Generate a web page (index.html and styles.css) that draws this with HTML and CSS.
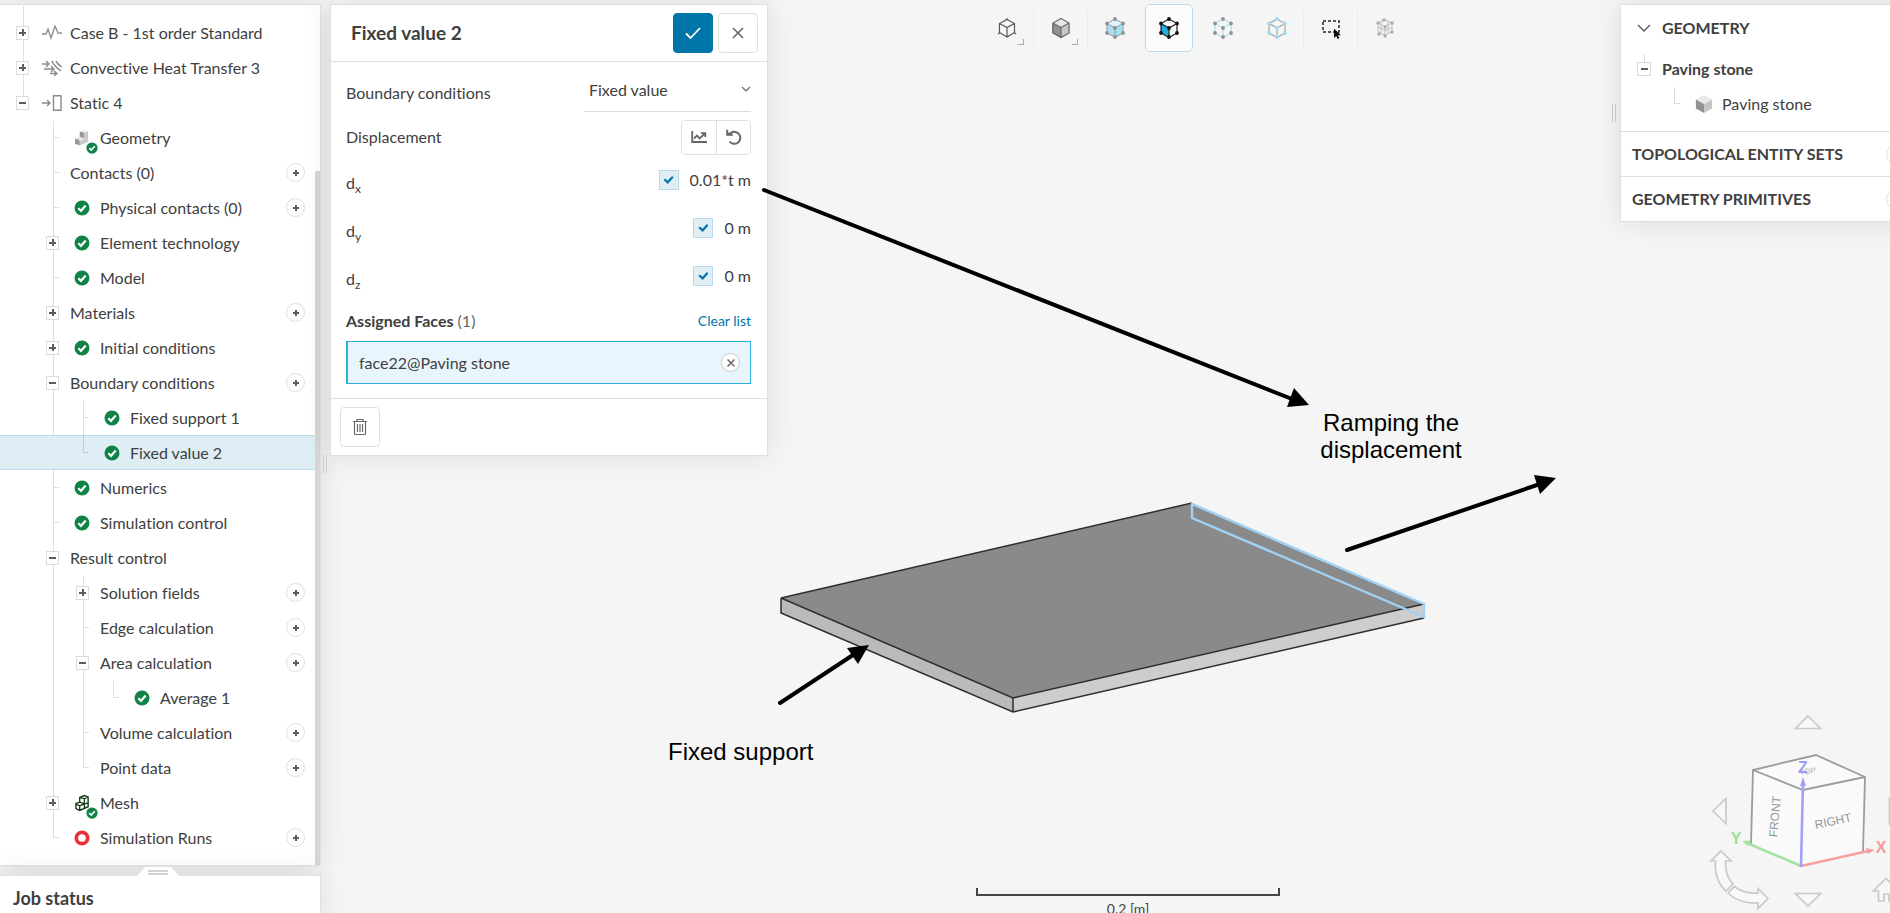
FILE: index.html
```
<!DOCTYPE html>
<html lang="en">
<head>
<meta charset="utf-8">
<title>Simulation workbench</title>
<link rel="stylesheet" href="styles.css">
</head>
<body>
<svg class="defs" aria-hidden="true">
  <symbol id="ok" viewBox="0 0 16 16"><circle cx="8" cy="8" r="7.5" fill="#0f8345"/><path d="M4.3 8.2l2.7 2.6 4.7-5.2" fill="none" stroke="#fff" stroke-width="2.2"/></symbol>
  <symbol id="cube" viewBox="0 0 20 22"><path d="M10 1l9 5-9 5-9-5z" fill="#e9e9e9"/><path d="M1 6l9 5v10l-9-5z" fill="#929292"/><path d="M19 6l-9 5v10l9-5z" fill="#c6c6c8"/></symbol>
</svg>
<div class="app">
  <svg class="scene" viewBox="0 0 1890 913" role="img" aria-label="Paving stone model">
    <path d="M781 598L781 613 1013 712 1013 698z" fill="#bababa"/>
    <path d="M1013 698V712L1424 618V604z" fill="#cdcdcd"/>
    <path d="M781 598L1192 503 1424 604 1013 698z" fill="#8a8a8a"/>
    <path d="M781 598L1192 503M781 598V613L1013 712 1424 618M781 598L1013 698 1424 604M1013 698V712" fill="none" stroke="#2e2e2e" stroke-width="1.5"/>
    <path d="M1192 504L1424 604V617L1192 518z" fill="none" stroke="#9fd2f6" stroke-width="2.4"/>
    <path d="M977 888V895H1279V888" fill="none" stroke="#444" stroke-width="2"/>
    <text x="1128" y="914" class="scale-label" text-anchor="middle">0.2 [m]</text>
  </svg>

  <aside class="sidebar">
    <nav class="panel tree-panel" aria-label="Simulation tree">
      <ul class="tree l0">
        <li><div class="row d0"><button class="tog" aria-label="Expand"></button><svg class="ico wide" viewBox="0 0 20 16"><path d="M0 9H4L6 4 9 13 13 1 16 8H20" fill="none" stroke="#8f8f8f" stroke-width="1.4"/></svg><span>Case B - 1st order Standard</span></div></li>
        <li><div class="row d0"><button class="tog" aria-label="Expand"></button><svg class="ico wide" viewBox="0 0 20 16"><g fill="none" stroke="#8a8a8a" stroke-width="1.4"><path d="M0 4H6M4 1l3 3-3 3M2 9H11M9 6l3 3-3 3M8 13.500H14M12 11l3 2.500-3 2.500M10 1q1 4 9 10M14 1q1 3 6 6"/></g></svg><span>Convective Heat Transfer 3</span></div></li>
        <li><div class="row d0"><button class="tog" aria-label="Collapse"></button><svg class="ico wide" viewBox="0 0 20 16"><path d="M0 8H8M5 5l3 3-3 3M11.500.8H19V15.200H11.500z" fill="none" stroke="#8a8a8a" stroke-width="1.4"/></svg><span>Static 4</span></div>
        <ul class="l1">
          <li><div class="row d1"><i class="tick"></i><span class="badged"><svg class="geo" viewBox="0 0 16 18"><path d="M5 2l5-2 4 1.500-4 2z" fill="#eee"/><path d="M5 2l5 1.500V10L5 8z" fill="#969696"/><path d="M10 3.500l4-2V13l-9 4V12l5-2z" fill="#cacaca"/><path d="M0 9.500l5-2 5 2-5 2z" fill="#e3e3e3"/><path d="M0 9.500l5 2V17l-5-2z" fill="#989898"/></svg><svg class="badge"><use href="#ok"/></svg></span><span>Geometry</span></div></li>
          <li><div class="row d1"><i class="tick"></i><span>Contacts (0)</span><button class="add" aria-label="Add contact"></button></div></li>
          <li><div class="row d1"><i class="tick"></i><svg class="ico"><use href="#ok"/></svg><span>Physical contacts (0)</span><button class="add" aria-label="Add physical contact"></button></div></li>
          <li><div class="row d1"><button class="tog" aria-label="Expand"></button><svg class="ico"><use href="#ok"/></svg><span>Element technology</span></div></li>
          <li><div class="row d1"><i class="tick"></i><svg class="ico"><use href="#ok"/></svg><span>Model</span></div></li>
          <li><div class="row d1"><button class="tog" aria-label="Expand"></button><span>Materials</span><button class="add" aria-label="Add material"></button></div></li>
          <li><div class="row d1"><button class="tog" aria-label="Expand"></button><svg class="ico"><use href="#ok"/></svg><span>Initial conditions</span></div></li>
          <li><div class="row d1"><button class="tog" aria-label="Collapse"></button><span>Boundary conditions</span><button class="add" aria-label="Add boundary condition"></button></div>
            <ul class="l2">
              <li><div class="row d2"><i class="tick"></i><svg class="ico"><use href="#ok"/></svg><span>Fixed support 1</span></div></li>
              <li><div class="row d2 selected"><i class="tick"></i><svg class="ico"><use href="#ok"/></svg><span>Fixed value 2</span></div></li>
            </ul></li>
          <li><div class="row d1"><i class="tick"></i><svg class="ico"><use href="#ok"/></svg><span>Numerics</span></div></li>
          <li><div class="row d1"><i class="tick"></i><svg class="ico"><use href="#ok"/></svg><span>Simulation control</span></div></li>
          <li><div class="row d1"><button class="tog" aria-label="Collapse"></button><span>Result control</span></div>
            <ul class="l2">
              <li><div class="row d2"><button class="tog" aria-label="Expand"></button><span>Solution fields</span><button class="add" aria-label="Add solution field"></button></div></li>
              <li><div class="row d2"><i class="tick"></i><span>Edge calculation</span><button class="add" aria-label="Add edge calculation"></button></div></li>
              <li><div class="row d2"><button class="tog" aria-label="Collapse"></button><span>Area calculation</span><button class="add" aria-label="Add area calculation"></button></div>
                <ul class="l3">
                  <li><div class="row d3"><i class="tick"></i><svg class="ico"><use href="#ok"/></svg><span>Average 1</span></div></li>
                </ul></li>
              <li><div class="row d2"><i class="tick"></i><span>Volume calculation</span><button class="add" aria-label="Add volume calculation"></button></div></li>
              <li><div class="row d2"><i class="tick"></i><span>Point data</span><button class="add" aria-label="Add point data"></button></div></li>
            </ul></li>
          <li><div class="row d1"><button class="tog" aria-label="Expand"></button><span class="badged"><svg class="geo" viewBox="0 0 16 18"><path d="M5 3l5-2 4 1.500V13l-9 4-4-2V9.500L5 8zM5 3l5 1.500 4-2M10 4.500V10M5 8l5 2-5 2-4-2M5 12v5M10 10v5M10 10l4-1" fill="none" stroke="#173d1a" stroke-width="1.5"/></svg><svg class="badge"><use href="#ok"/></svg></span><span>Mesh</span></div></li>
          <li><div class="row d1"><i class="tick"></i><svg class="ico" viewBox="0 0 16 16"><circle cx="8" cy="8" r="5.700" fill="#fff" stroke="#e9303b" stroke-width="3.700"/></svg><span>Simulation Runs</span><button class="add" aria-label="Add simulation run"></button></div></li>
        </ul></li>
      </ul>
      <div class="scrollbar"></div>
    </nav>
    <div class="resize"><svg viewBox="0 0 42 10"><path d="M0 10L8 1H34L42 10z" fill="#fff"/><path d="M11 5H31M11 8H31" stroke="#c4c4c4" stroke-width="1.500"/></svg></div>
    <section class="panel jobs"><h2>Job status</h2></section>
  </aside>
  <div class="grip grip-left"></div>

  <form class="panel settings">
    <header><h1>Fixed value 2</h1>
      <button type="button" class="btn primary" aria-label="Apply"><svg viewBox="0 0 16 14"><path d="M1 7.500l4.500 4.500L15 2" fill="none" stroke="#fff" stroke-width="1.800"/></svg></button>
      <button type="button" class="btn" aria-label="Close"><svg viewBox="0 0 16 14"><path d="M3 2l10 10M13 2L3 12" fill="none" stroke="#666" stroke-width="1.600"/></svg></button>
    </header>
    <div class="fields">
      <div class="field kind"><label for="kind">Boundary conditions</label>
        <span class="select"><select id="kind"><option>Fixed value</option></select><svg viewBox="0 0 10 6"><path d="M1 1l4 4 4-4" fill="none" stroke="#666" stroke-width="1.200"/></svg></span></div>
      <div class="field disp"><span>Displacement</span>
        <span class="group"><button type="button" aria-label="Plot"><svg viewBox="0 0 16 14"><path d="M1.200 1V12H16M3 8.500L6 5.500l2.500 3L13.500 4M10 3.200h4.300V7" fill="none" stroke="#666" stroke-width="1.800"/></svg></button><button type="button" aria-label="Reset"><svg viewBox="0 0 16 16"><path d="M1 5.500L5 3.800A6 6 0 1 1 3.500 12.500M1.200.8V5.800H6.800" fill="none" stroke="#666" stroke-width="2"/></svg></button></span></div>
      <div class="field comp"><label for="dx">d<sub>x</sub></label><span class="val"><input type="checkbox" id="dx" checked>0.01*t m</span></div>
      <div class="field comp"><label for="dy">d<sub>y</sub></label><span class="val"><input type="checkbox" id="dy" checked>0 m</span></div>
      <div class="field comp"><label for="dz">d<sub>z</sub></label><span class="val"><input type="checkbox" id="dz" checked>0 m</span></div>
      <div class="field faces"><span><b>Assigned Faces</b> <span class="count">(1)</span></span><a href="#clear">Clear list</a></div>
      <div class="face"><span>face22@Paving stone</span><button type="button" class="remove" aria-label="Remove face"><svg viewBox="0 0 10 10"><path d="M1.500 1.500l7 7M8.500 1.500l-7 7" stroke="#666" stroke-width="1.500"/></svg></button></div>
    </div>
    <footer><button type="button" class="btn" aria-label="Delete"><svg class="trash" viewBox="0 0 14 18"><path d="M0 3.500H14M4 3V1.500H10V3M1.500 4V15.500Q1.500 16.500 2.500 16.500H11.500Q12.500 16.500 12.500 15.500V4M4.500 6v8M7 6v8M9.500 6v8" fill="none" stroke="#6a6a6a" stroke-width="1.200"/></svg></button></footer>
  </form>

  <div class="toolbar" role="toolbar" aria-label="Viewer">
    <button class="menu" aria-label="View"><svg viewBox="0 0 20 22"><path d="M10 2.500l7.500 4V15.500L10 20 2.500 15.500V6.500zM2.500 6.500l7.500 4 7.500-4M10 10.500V20M10 1v2M1 17l2-1.500M19 17l-2-1.500" fill="#fafafa" stroke="#555" stroke-width="1.200"/></svg></button>
    <button class="menu sep" aria-label="Render mode"><svg viewBox="0 0 20 22"><use href="#cube"/><path d="M10 1.500l8 4.500V16L10 20.500 2 16V6zM2 6l8 4.500L18 6M10 10.500V20" fill="none" stroke="#666" stroke-width="1.100"/></svg></button>
    <button class="sep" aria-label="Select volumes"><svg viewBox="0 0 20 22"><path d="M10 2l8 4.500V16L10 20.500 2 16V6.500z" fill="#a8e0f3"/><path d="M10 2l8 4.500-8 4.500-8-4.500z" fill="#dff2f9"/><path d="M10 2l8 4.500V16L10 20.500 2 16V6.500zM2 6.500l8 4.500 8-4.500M10 11V20" fill="none" stroke="#8f9da3"/><path d="M10 2h0M18 6.500h0M18 16h0M10 20h0M2 16h0M2 6.500h0M10 11h0" stroke="#919191" stroke-width="3.800" stroke-linecap="round"/></svg></button>
    <button class="active" aria-label="Select faces"><svg viewBox="0 0 20 22"><path d="M2 6.500l8 4.500V20L2 16z" fill="#22aee3"/><path d="M10 2l8 4.500V16L10 20.500 2 16V6.500zM2 6.500l8 4.500 8-4.500M10 11V20" fill="none" stroke="#222" stroke-width="1.200"/><path d="M10 2h0M18 6.500h0M18 16h0M10 20h0M2 16h0M2 6.500h0M10 11h0" stroke="#111" stroke-width="3.800" stroke-linecap="round"/></svg></button>
    <button aria-label="Select edges"><svg viewBox="0 0 20 22"><path d="M10 2l8 4.500V16L10 20.500 2 16V6.500zM2 6.500l8 4.500 8-4.500M10 11V20" fill="none" stroke="#b8e3f2" stroke-width="1.400"/><path d="M10 2h0M18 6.500h0M18 16h0M10 20h0M2 16h0M2 6.500h0M10 11h0" stroke="#919191" stroke-width="3.800" stroke-linecap="round"/></svg></button>
    <button aria-label="Select vertices"><svg viewBox="0 0 20 22"><path d="M10 2l8 4.500V16L10 20.500 2 16V6.500zM2 6.500l8 4.500 8-4.500M10 11V20" fill="none" stroke="#a5a5a5" stroke-width="1.200"/><path d="M10 2h0M18 6.500h0M18 16h0M10 20h0M2 16h0M2 6.500h0M10 11h0" stroke="#a0def3" stroke-width="3.800" stroke-linecap="round"/></svg></button>
    <button class="sep" aria-label="Box select"><svg viewBox="0 0 20 22"><path d="M2 4H18V15H2z" fill="none" stroke="#222" stroke-width="1.500" stroke-dasharray="3 2"/><path d="M13 11.500V21l2.200-2 1.500 3 1.700-1-1.500-2.700H20z" fill="#111"/></svg></button>
    <button class="sep" aria-label="Select mesh"><svg viewBox="0 0 20 22"><path d="M9 2.500l8 3.500V14.500L10 18.500 3 14.500V6zM3 6l7 3.500L17 6M10 9.500v9M3 10l7 3.500 7-3.500M6 4v12M13 4v12" fill="none" stroke="#bdbdbd"/><path d="M9 3h0M17 6h0M17 15h0M10 19h0M4 17h0M3 6h0M10 10h0" stroke="#acacac" stroke-width="3.400" stroke-linecap="round"/></svg></button>
  </div>
  <div class="grip grip-right"></div>

  <aside class="panel geometry">
    <section class="bodies">
      <h3><svg viewBox="0 0 14 8"><path d="M1 1l6 6 6-6" fill="none" stroke="#555" stroke-width="1.300"/></svg>GEOMETRY</h3>
      <div class="part"><button class="tog" aria-label="Collapse"></button><b>Paving stone</b></div>
      <div class="part body"><i></i><svg><use href="#cube"/></svg><span>Paving stone</span></div>
    </section>
    <section class="sets"><h3>TOPOLOGICAL ENTITY SETS</h3><button class="add" aria-label="Add entity set"></button></section>
    <section class="sets"><h3>GEOMETRY PRIMITIVES</h3><button class="add" aria-label="Add primitive"></button></section>
  </aside>

  <svg class="navcube" viewBox="0 0 200 213" role="img" aria-label="View cube">
    <path d="M63 70L126 55 175 77V152L111 166 61 144z" fill="#fafafa"/>
    <g fill="none" stroke="#9c9c9c" stroke-width="1.800"><path d="M61 144L63 70 126 55 175 77 173 152M63 70L113 90 175 77"/></g>
    <g fill="#f8f8f8" stroke="#c9c9c9" stroke-width="1.700"><path d="M118 16l12.500 12.500H105.500zM118 206l12.500-12.500H105.500zM23 111L36 98.500V123.500zM212 111L199.500 98.500V123.500z"/>
      <path d="M31 151L41 161H35.500Q35 176 43 184L36 191Q24 180 25.500 161H21z"/><path d="M38 193L44.500 186.500Q54 194 68 193V188.500L78 198.500 68 208.500V203Q49 204 38 193z"/>
      <path d="M196 178.500L209 191H204V201H199V194H194V201H188.500V191H183.500z"/></g>
    <text x="118" y="74" class="face-label top" transform="rotate(-8 118 74)" text-anchor="middle">TOP</text>
    <text x="89" y="117" class="face-label" transform="rotate(-85 89 117)" text-anchor="middle">FRONT</text>
    <text x="144" y="125" class="face-label" transform="rotate(-12 144 125)" text-anchor="middle">RIGHT</text>
    <g stroke-width="2.600"><path d="M111 166L57 143" stroke="#a2e3a2"/><path d="M111 166L178 151" stroke="#f7a0a0"/><path d="M111 167L113 82" stroke="#a0a0f8"/></g>
    <path d="M52 141l9-.5-3 5.500z" fill="#a2e3a2"/><path d="M185 150l-9-2 1.500 6z" fill="#f7a0a0"/><path d="M113 77l-3 9h6z" fill="#a0a0f8"/>
    <text x="46" y="144" class="axis y" text-anchor="middle">Y</text><text x="191" y="153" class="axis x" text-anchor="middle">X</text><text x="113" y="73" class="axis z" text-anchor="middle">Z</text>
  </svg>

  <svg class="notes" viewBox="0 0 1890 913" role="img" aria-label="Annotations">
    <g stroke="#000" stroke-width="4" stroke-linecap="round"><path d="M764 190L1292 399M780 703L856 653M1347 550L1540 484"/></g>
    <path d="M1309 405L1294 388 1287 407zM869 645L847 648 858 664zM1556 478L1534 475 1540 494z"/>
    <text x="1391" y="431" text-anchor="middle">Ramping the</text><text x="1391" y="458" text-anchor="middle">displacement</text>
    <text x="668" y="760">Fixed support</text>
  </svg>
</div>
</body>
</html>
```
FILE: styles.css
```
* { box-sizing: border-box; }
body { margin: 0; background: #f5f5f5; color: #404040; font: 16px/20px Lato, "Open Sans", sans-serif; font-variant-ligatures: none; overflow: hidden; }
button { font: inherit; padding: 0; background: #fff; border: 1px solid #e0e0e0; display: grid; place-items: center; place-content: center; }
h1, h2, h3, ul { margin: 0; padding: 0; }
ul { list-style: none; position: relative; }
.defs { position: absolute; width: 0; height: 0; }
.app { position: relative; display: flex; align-items: flex-start; height: 100vh; overflow: hidden; padding-top: 4px; }
.scene, .notes { position: absolute; top: 0; left: 0; width: 100%; height: 100%; pointer-events: none; }
.scale-label { font-size: 14px; fill: #444; }
.notes text { font: 24px "Liberation Sans", Arial, sans-serif; fill: #000; }
.panel { position: relative; background: #fff; border: 1px solid #e0e0e0; box-shadow: 0 0 28px rgba(0, 0, 0, .1); }

.sidebar { position: relative; flex: 0 0 321px; display: flex; flex-direction: column; height: 100%; }
.tree-panel { border-left: 0; padding: 10px 0; }
.row { display: flex; align-items: center; height: 35px; margin-right: 5px; padding-right: 10px; border: solid transparent; border-width: 1px 0; }
.row.d0 { padding-left: 16px; }
.row.d1 { padding-left: 46px; }
.row.d2 { padding-left: 76px; }
.row.d3 { padding-left: 106px; }
.row.selected { background: #dfedf5; border-color: #b9dcea; }
.tree ul::before, .l0::before { content: ""; position: absolute; top: 1px; bottom: 17px; width: 1px; background: rgba(0, 0, 0, .13); }
.tree.l0::before { left: 23px; top: -9px; height: 97px; bottom: auto; }
.tree .l1::before { left: 53px; }
.tree .l2::before { left: 83px; }
.tree .l3::before { left: 113px; }
.tog { position: relative; width: 13px; height: 14px; flex: none; margin-right: 11px; border-color: #dcdcdc; }
.tog::before, .add::before, .add::after { content: ""; grid-area: 1 / 1; width: 7px; height: 2px; background: #5d5d5d; }
.tog[aria-label="Expand"]::after { content: ""; grid-area: 1 / 1; width: 2px; height: 7px; background: #5d5d5d; }
.tick { width: 5px; height: 1px; margin: 0 11px 0 8px; background: rgba(0, 0, 0, .13); }
.ico { width: 16px; height: 16px; margin: 0 10px 0 4px; }
.ico.wide { width: 20px; margin: 0 8px 0 2px; }
.badged { position: relative; width: 30px; height: 18px; padding-left: 5px; }
.geo { display: block; width: 15px; height: 18px; }
.badge { position: absolute; left: 16px; top: 13px; width: 12px; height: 12px; }
.add { width: 19px; height: 19px; border-radius: 50%; margin-left: auto; border-color: #dcdfe4; }
.add::before { width: 6px; }
.add::after { width: 2px; height: 6px; }
.scrollbar { position: absolute; right: 0; top: 166px; bottom: 0; width: 5px; background: #d6d6d6; }
.resize { position: relative; z-index: 1; height: 9px; display: flex; justify-content: center; margin: 0 6px 0 0; }
.resize svg { width: 42px; height: 10px; }
.jobs { flex: 1; border-left: 0; padding: 11px 13px; }
.jobs h2 { font-size: 18px; line-height: 22px; }
.grip { position: relative; flex: none; width: 4px; height: 18px; border: solid #ccd2d6; border-width: 0 1px; }
.grip-left { margin: 451px 3px 0 2px; }

.settings { flex: 0 0 438px; }
.settings header { display: flex; align-items: center; gap: 5px; height: 57px; padding: 0 9px 0 20px; border-bottom: 1px solid #e0e0e0; }
.settings h1 { flex: 1; font-size: 19px; }
.btn { width: 40px; height: 40px; border-radius: 4px; }
.btn svg { width: 16px; height: 14px; }
.btn .trash { width: 14px; height: 18px; }
.primary { background: #0075a9; border-color: #0075a9; }
.fields { padding: 7px 16px 14px 15px; }
.field { display: flex; align-items: center; justify-content: space-between; }
.kind { height: 43px; }
.kind label { padding-top: 4px; }
.select { position: relative; display: flex; width: 167px; height: 43px; border-bottom: 1px solid #dcdcdc; }
.select select { appearance: none; width: 100%; border: 0; background: none; font: inherit; color: inherit; padding: 0 5px; }
.select svg { position: absolute; right: 0; top: 17px; width: 10px; height: 6px; }
.disp { height: 44px; padding-top: 6px; }
.group { display: flex; border: 1px solid #e0e0e0; border-radius: 4px; overflow: hidden; }
.group button { width: 34px; height: 33px; border: 0; }
.group button + button { border-left: 1px solid #e0e0e0; }
.group svg { width: 16px; height: 16px; }
.comp { height: 48px; }
.comp label { padding-top: 5px; }
sub { font-size: 12px; line-height: 0; vertical-align: -4px; }
.val { display: flex; align-items: center; gap: 11px; }
input[type=checkbox] { appearance: none; width: 20px; height: 20px; margin: 0; border: 1px solid #b5dae9; background: #dfedf5; display: grid; place-items: center; }
input[type=checkbox]::before { content: ""; width: 10px; height: 8px; background: #0075a9; clip-path: polygon(0 50%, 15% 30%, 40% 58%, 85% 0, 100% 18%, 42% 100%); }
.faces { height: 41px; }
.faces .count { color: #666; }
.faces a { font-size: 14px; color: #0075a9; text-decoration: none; }
.face { display: flex; align-items: center; justify-content: space-between; height: 43px; padding: 0 10px 0 11px; border: 1px solid #2bb0dc; border-left-width: 2px; background: #e8f5fc; }
.remove { width: 19px; height: 19px; border-radius: 50%; border-color: #ccc; }
.remove svg { width: 10px; height: 10px; }
.settings footer { padding: 8px 9px; border-top: 1px solid #e0e0e0; }

.toolbar { position: relative; flex: 1; display: flex; justify-content: center; gap: 6px; padding-left: 11px; }
.toolbar button { position: relative; width: 48px; height: 48px; background: none; border-color: transparent; border-radius: 5px; }
.toolbar svg { width: 20px; height: 22px; }
.toolbar .active { background: #fbfbfb; border-color: #b5deef; }
.toolbar .sep::before { content: ""; position: absolute; left: -5px; top: 5px; width: 1px; height: 38px; background: #ececec; }
.toolbar .menu::after { content: ""; position: absolute; right: 6px; bottom: 6px; width: 5px; height: 5px; border: solid #aaa; border-width: 0 1px 1px 0; }
.grip-right { margin: 100px 4px 0 0; }

.geometry { flex: 0 0 300px; margin-right: -30px; }
.geometry h3 { font-size: 16px; font-weight: 700; }
.bodies { padding: 13px 16px 10px; }
.bodies h3 { display: flex; align-items: center; height: 20px; margin-bottom: 13px; }
.bodies h3 svg { width: 14px; height: 8px; margin-right: 11px; }
.part { display: flex; align-items: center; height: 35px; }
.part .tog { width: 14px; }
.part .tog::after { content: ""; position: absolute; left: 6px; top: -9px; width: 1px; height: 8px; background: #ddd; }
.body i { width: 6px; height: 17px; margin: -16px 15px 0 37px; border: solid #ddd; border-width: 0 0 1px 1px; }
.body svg { width: 18px; height: 20px; margin-right: 9px; }
.sets { display: flex; align-items: center; justify-content: space-between; height: 45px; padding: 0 14px 0 11px; border-top: 1px solid #e0e0e0; }
.navcube { position: absolute; right: 0; bottom: 0; width: 200px; height: 213px; }
.face-label { font: 12px "Liberation Sans", Arial, sans-serif; fill: #969696; }
.face-label.top { font-size: 8px; fill: #b0b0b0; }
.axis { font: bold 16px "Liberation Sans", Arial, sans-serif; }
.axis.x { fill: #f59a9a; }
.axis.y { fill: #9be09b; }
.axis.z { fill: #9c9cf8; }
```
